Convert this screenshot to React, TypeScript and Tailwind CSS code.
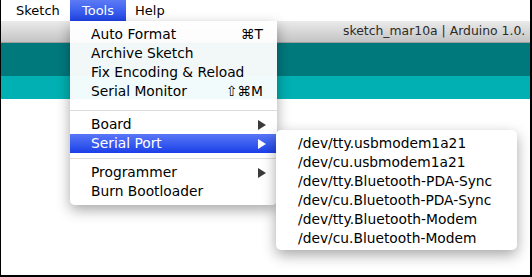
import React from "react";

const FONT = { fontFamily: '"DejaVu Sans", "Liberation Sans", sans-serif' };

type Item =
  | { kind: "item"; label: string; shortcut?: string; sub?: boolean; active?: boolean }
  | { kind: "sep"; h: string };

const TOOLS: Item[] = [
  { kind: "item", label: "Auto Format", shortcut: "⌘T" },
  { kind: "item", label: "Archive Sketch" },
  { kind: "item", label: "Fix Encoding & Reload" },
  { kind: "item", label: "Serial Monitor", shortcut: "⇧⌘M" },
  { kind: "sep", h: "h-[14px] pt-[9px]" },
  { kind: "item", label: "Board", sub: true },
  { kind: "item", label: "Serial Port", sub: true, active: true },
  { kind: "sep", h: "h-[10px] pt-[5px]" },
  { kind: "item", label: "Programmer", sub: true },
  { kind: "item", label: "Burn Bootloader" },
];

const PORTS = [
  "/dev/tty.usbmodem1a21",
  "/dev/cu.usbmodem1a21",
  "/dev/tty.Bluetooth-PDA-Sync",
  "/dev/cu.Bluetooth-PDA-Sync",
  "/dev/tty.Bluetooth-Modem",
  "/dev/cu.Bluetooth-Modem",
];

function Arrow({ light }: { light?: boolean }) {
  return (
    <svg width="8" height="10" viewBox="0 0 8 10" className="shrink-0">
      <path d="M0 0 L8 5 L0 10 Z" fill={light ? "#ffffff" : "#3a3a3a"} />
    </svg>
  );
}

export default function App() {
  return (
    <div
      className="relative w-[532px] h-[277px] overflow-hidden bg-white border-l border-r-2 border-b-2 border-black"
      style={FONT}
    >
      {/* menu bar */}
      <div className="flex h-[21px] items-stretch bg-white text-[13px] text-black">
        <span className="ml-[15px] w-[54px] flex items-center">Sketch</span>
        <span className="w-[56px] flex items-center justify-center text-white bg-gradient-to-b from-[#5d7bf6] to-[#1f42e6]">
          Tools
        </span>
        <span className="pl-[9px] flex items-center">Help</span>
      </div>

      {/* window title bar */}
      <div className="h-[22px] flex items-center pl-[342px] whitespace-nowrap text-[12.4px] text-[#2b2b2b] bg-gradient-to-b from-[#ebebeb] to-[#c4c4c4] border-b border-[#a0a0a0]">
        sketch_mar10a | Arduino 1.0.
      </div>

      {/* toolbar + tabs */}
      <div className="h-[33px] bg-[#00797d]" />
      <div className="h-[23px] bg-[#00b0b2]" />

      {/* Tools menu */}
      <div className="absolute left-[69px] top-[21px] w-[207px] pt-[4px] pb-[4px] bg-white/[0.95] rounded-b-[5px] shadow-[0_5px_14px_rgba(0,0,0,0.35)] text-[13.8px] text-black">
        {TOOLS.map((it, i) =>
          it.kind === "sep" ? (
            <div key={i} className={it.h}>
              <div className="h-px bg-[#dcdcdc]" />
            </div>
          ) : (
            <div
              key={i}
              className={`h-[19px] flex items-center pl-[21px] ${
                it.sub ? "pr-[11px]" : "pr-[14px]"
              } ${
                it.active
                  ? "text-white bg-gradient-to-b from-[#5a76f7] to-[#1a3de8]"
                  : ""
              }`}
            >
              <span className="flex-1 whitespace-nowrap">{it.label}</span>
              {it.shortcut && <span className="whitespace-nowrap">{it.shortcut}</span>}
              {it.sub && <Arrow light={it.active} />}
            </div>
          )
        )}
      </div>

      {/* Serial Port submenu */}
      <div className="absolute left-[275px] top-[130px] w-[241px] pt-[4px] pb-[2px] bg-white rounded-[5px] shadow-[0_5px_14px_rgba(0,0,0,0.35)] text-[13.8px] text-black">
        {PORTS.map((p) => (
          <div key={p} className="h-[19px] flex items-center pl-[22px] whitespace-nowrap">
            {p}
          </div>
        ))}
      </div>
    </div>
  );
}
